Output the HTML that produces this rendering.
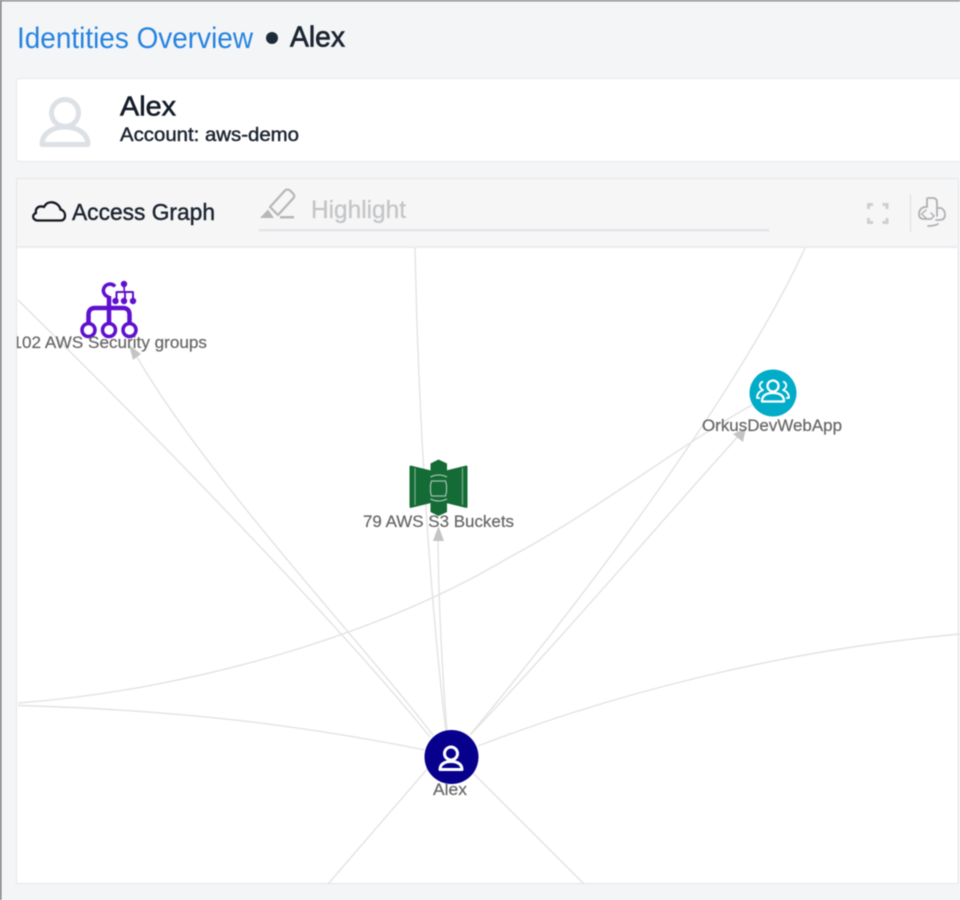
<!DOCTYPE html>
<html><head><meta charset="utf-8"><style>
html,body{margin:0;padding:0;width:960px;height:900px;overflow:hidden;background:#f4f5f7}
svg{position:absolute;left:0;top:0;filter:blur(.45px)}
text{font-family:"Liberation Sans",Arial,sans-serif}
.lbl{font-size:17px;fill:#666;stroke:#666;stroke-width:.2px}
</style></head><body>
<svg width="960" height="900" viewBox="0 0 960 900" xmlns="http://www.w3.org/2000/svg">
<defs><clipPath id="c"><rect x="17" y="248" width="940" height="636"/></clipPath></defs>
<rect width="960" height="900" fill="#f4f5f7"/>
<rect x="0" y="0" width="960" height="1.5" fill="#8e9094"/>
<rect x="0" y="0" width="1.5" height="900" fill="#77797d"/>
<text x="17" y="48" font-size="30" fill="#2583e0" textLength="236" lengthAdjust="spacingAndGlyphs">Identities Overview</text>
<circle cx="272" cy="38" r="6" fill="#1f2a38"/>
<text x="290" y="46.500" font-size="29" fill="#1b2430" stroke="#1b2430" stroke-width=".7" textLength="55" lengthAdjust="spacingAndGlyphs">Alex</text>
<rect x="16.500" y="78.500" width="950" height="83" rx="2" fill="#fff" stroke="#e6e9ed"/>
<g fill="none" stroke="#dde1e5" stroke-width="5">
<circle cx="65" cy="113" r="13.500"/>
<path d="M42 144.500C42 134 52 127 65 127C78 127 88 134 88 144.500Z" stroke-linejoin="round"/>
</g>
<text x="120" y="115.500" font-size="28" fill="#141c27" stroke="#141c27" stroke-width=".6" textLength="56" lengthAdjust="spacingAndGlyphs">Alex</text>
<text x="120" y="141" font-size="19" fill="#1b2430" stroke="#1b2430" stroke-width=".45" textLength="179" lengthAdjust="spacingAndGlyphs">Account: aws-demo</text>
<rect x="16.500" y="178.500" width="950" height="705" fill="#fff" stroke="#e3e6ea"/>
<rect x="958" y="178" width="2" height="710" fill="#f4f5f7"/>
<rect x="957.500" y="178" width="1" height="706" fill="#e3e6ea"/>
<rect x="17" y="179" width="940" height="68" fill="#f6f6f7"/>
<rect x="17" y="246" width="940" height="2" fill="#e9ebef"/>
<path d="M38 220.500H61C66.500 220.500 66.500 211 60.500 209.500C59 202 48 199 44 207C38 205 35 209 36 213C31 215 33 220.500 38 220.500Z" fill="none" stroke="#14181f" stroke-width="2.300" stroke-linejoin="round"/>
<text x="72" y="220" font-size="23.500" fill="#1b2430" stroke="#1b2430" stroke-width=".45" textLength="143" lengthAdjust="spacingAndGlyphs">Access Graph</text>
<path d="M270 207L285 190.500Q287.500 188.500 290 190.500L293.500 194Q295 196 293.500 198L278 215Z" fill="none" stroke="#b5b7b9" stroke-width="2.200" stroke-linejoin="round"/>
<path d="M260 218L268 209.500L274 218Z" fill="#b5b7b9"/>
<rect x="280" y="216" width="14" height="2.500" fill="#b5b7b9"/>
<text x="311" y="218" font-size="25" fill="#c3c5c7" stroke="#c3c5c7" stroke-width=".3" textLength="95" lengthAdjust="spacingAndGlyphs">Highlight</text>
<rect x="259" y="229" width="510" height="2.500" fill="#e2e5e9"/>
<path d="M868.500 209V204.500H873M882.500 204.500H887V209M868.500 218V222.500H873M882.500 222.500H887V218" fill="none" stroke="#cdcfd1" stroke-width="3"/>
<rect x="910" y="194" width="1" height="38" fill="#dcdee0"/>
<g fill="none" stroke="#aeb0b2" stroke-width="1.800" stroke-linecap="round" stroke-linejoin="round">
<path d="M927 207V199Q927 198 929 198H933Q937 198 937 203V216"/>
<path d="M927 207H924Q919 209 919 214Q919 219 924 219H931M937 208H941Q945 210 945 215Q945 220 939 220H936"/>
<path d="M926 210L921.500 214L926 218M931 213L934 216L931 219" stroke-width="1.500"/>
<path d="M928 226Q934 226 938 224"/>
</g>
<g fill="none" stroke="#e3e3e4" stroke-width="1.400">
<path d="M18 300C150 430 340 625 430 737"/>
<path d="M133 350C200 470 360 640 433 735"/>
<path d="M415 248C418 400 428 580 446 732"/>
<path d="M438 530C438 590 442 670 447 732"/>
<path d="M805 248C740 390 590 590 470 735"/>
<path d="M742 432C680 500 560 640 472 733"/>
<path d="M18 703C190 690 380 635 508 558C590 515 680 445 752 405"/>
<path d="M18 705.500C180 710 300 725 425 750"/>
<path d="M478 746C610 695 780 650 960 634"/>
<path d="M435 760L328 884"/>
<path d="M470 770L584 884"/>
</g>
<g fill="#c4c4c5">
<path d="M129 345L141 354L133 360Z"/>
<path d="M438.500 526L444 541H433Z"/>
<path d="M746 428L743 442L733 434Z"/>
</g>
<g fill="none" stroke="#5f0fcf" stroke-width="3.500">
<circle cx="88.500" cy="330" r="6.500"/><circle cx="109" cy="330" r="6.500"/><circle cx="129.500" cy="330" r="6.500"/>
<path d="M88.500 323V315Q88.500 308 95 308H123Q129.500 308 129.500 315V323M109 323V296" stroke-width="4.500"/>
<path d="M115 286.500A6.500 6.500 0 1 0 109 297"/>
</g>
<g fill="#5f0fcf">
<circle cx="124" cy="284" r="3.200"/><circle cx="115.500" cy="301" r="3.200"/><circle cx="124" cy="301" r="3.200"/><circle cx="133" cy="301" r="3.200"/>
<path d="M123 284h2v7h7.500q1.500 0 1.500 1.500v8h-2v-7.500h-6v7h-2v-7h-6.500v7h-2v-7.500q0-1.500 1.500-1.500h6.500Z"/>
</g>
<text class="lbl" x="12.500" y="348" clip-path="url(#c)" textLength="194.500" lengthAdjust="spacingAndGlyphs">102 AWS Security groups</text>
<g fill="#146b36">
<path d="M410.500 465.500L431 470.500V503L410.500 508Q409.500 508 409.500 506V467.500Q409.500 465.500 410.500 465.500Z"/>
<path d="M466.500 465.500L446 470.500V503L466.500 508Q467.500 508 467.500 506V467.500Q467.500 465.500 466.500 465.500Z"/>
<path d="M430.500 463.500L438.500 459.500L447 463.500V503L447 512L438.500 516L430.500 512Z"/>
</g>
<path d="M431.500 481H445.500L446.500 485V492L445.500 496H431.500L430.500 492V485Z" fill="none" stroke="#9cc0aa" stroke-width="1.300"/>
<path d="M430.500 477Q438.500 473 447 477M430.500 499Q438.500 503 447 499" stroke="#9cc0aa" stroke-width="1.300" fill="none"/>
<path d="M415 468V505M462.500 468V505" stroke="#7fae92" stroke-width="1.200" fill="none"/>
<text class="lbl" x="363" y="527" textLength="151" lengthAdjust="spacingAndGlyphs">79 AWS S3 Buckets</text>
<circle cx="773" cy="393" r="23.500" fill="#00acc8"/>
<g fill="none" stroke="#fff" stroke-width="2.300" stroke-linejoin="round">
<circle cx="773" cy="386" r="5.500"/>
<path d="M762 401.500C762 395 767 393 773 393C779 393 784 395 784 401.500Z"/>
<path d="M763 381.500Q759 383 760 387Q761 389 763 390Q757 392 757 398H760M783 381.500Q787 383 786 387Q785 389 783 390Q789 392 789 398H786" stroke-width="1.800"/>
</g>
<text class="lbl" x="702" y="431" textLength="140" lengthAdjust="spacingAndGlyphs">OrkusDevWebApp</text>
<circle cx="451.500" cy="757" r="27" fill="#06008c"/>
<g fill="none" stroke="#fff" stroke-width="3" stroke-linejoin="round">
<circle cx="451" cy="753.500" r="6.500"/>
<path d="M440 769.500C440 764 445 761.500 451 761.500C457 761.500 462 764 462 769.500Z"/>
</g>
<text class="lbl" x="433" y="795" textLength="34" lengthAdjust="spacingAndGlyphs">Alex</text>
</svg>
</body></html>
